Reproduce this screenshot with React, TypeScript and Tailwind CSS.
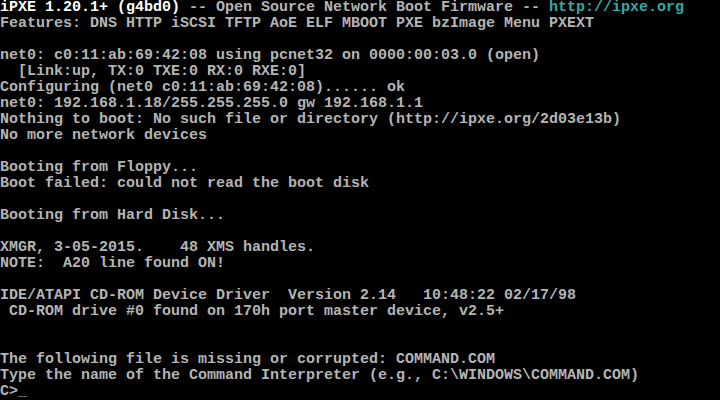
const lines: string[] = [
  '',
  'Features: DNS HTTP iSCSI TFTP AoE ELF MBOOT PXE bzImage Menu PXEXT',
  '',
  'net0: c0:11:ab:69:42:08 using pcnet32 on 0000:00:03.0 (open)',
  '  [Link:up, TX:0 TXE:0 RX:0 RXE:0]',
  'Configuring (net0 c0:11:ab:69:42:08)...... ok',
  'net0: 192.168.1.18/255.255.255.0 gw 192.168.1.1',
  'Nothing to boot: No such file or directory (http://ipxe.org/2d03e13b)',
  'No more network devices',
  '',
  'Booting from Floppy...',
  'Boot failed: could not read the boot disk',
  '',
  'Booting from Hard Disk...',
  '',
  'XMGR, 3-05-2015.    48 XMS handles.',
  'NOTE:  A20 line found ON!',
  '',
  'IDE/ATAPI CD-ROM Device Driver  Version 2.14   10:48:22 02/17/98',
  ' CD-ROM drive #0 found on 170h port master device, v2.5+',
  '',
  '',
  'The following file is missing or corrupted: COMMAND.COM',
  'Type the name of the Command Interpreter (e.g., C:\\WINDOWS\\COMMAND.COM)',
  'C>_',
];

export default function App() {
  return (
    <div className="w-[720px] h-[400px] bg-black overflow-hidden font-['Liberation_Mono',monospace] text-[15px] leading-[16px] font-bold text-[#b4b4b4]">
      {lines.map((line, i) =>
        i === 0 ? (
          <div key={i} className="h-[16px] whitespace-pre">
            <span className="text-white">iPXE 1.20.1+ (g4bd0)</span>
            {' -- Open Source Network Boot Firmware -- '}
            <span className="text-[#35a7a7]">http://ipxe.org</span>
          </div>
        ) : (
          <div key={i} className="h-[16px] whitespace-pre">
            {line}
          </div>
        )
      )}
    </div>
  );
}
